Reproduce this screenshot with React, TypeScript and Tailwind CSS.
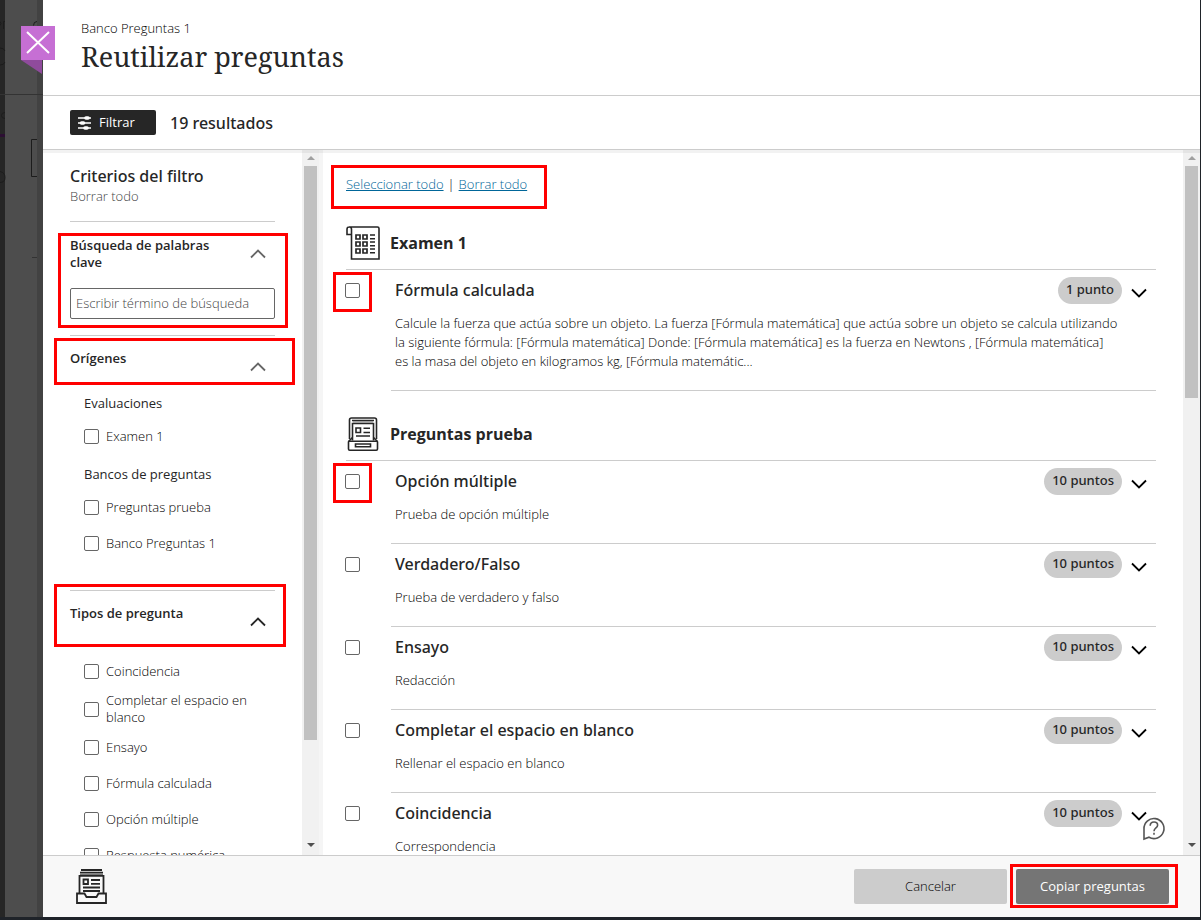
import type { ReactNode } from "react";

const evaluations = ["Examen 1"];
const banks = ["Preguntas prueba", "Banco Preguntas 1"];
const questionTypes = [
  "Coincidencia",
  "Completar el espacio en blanco",
  "Ensayo",
  "Fórmula calculada",
  "Opción múltiple",
  "Respuesta numérica",
];

type Question = {
  title: string;
  text: string;
  points: string;
  marked?: boolean;
};

const examQuestions: Question[] = [
  {
    title: "Fórmula calculada",
    text: "Calcule la fuerza que actúa sobre un objeto. La fuerza [Fórmula matemática] que actúa sobre un objeto se calcula utilizando la siguiente fórmula: [Fórmula matemática] Donde: [Fórmula matemática] es la fuerza en Newtons , [Fórmula matemática] es la masa del objeto en kilogramos kg, [Fórmula matemátic...",
    points: "1 punto",
    marked: true,
  },
];

const bankQuestions: Question[] = [
  { title: "Opción múltiple", text: "Prueba de opción múltiple", points: "10 puntos", marked: true },
  { title: "Verdadero/Falso", text: "Prueba de verdadero y falso", points: "10 puntos" },
  { title: "Ensayo", text: "Redacción", points: "10 puntos" },
  { title: "Completar el espacio en blanco", text: "Rellenar el espacio en blanco", points: "10 puntos" },
  { title: "Coincidencia", text: "Correspondencia", points: "10 puntos" },
];

// Red frame drawn over the part of the page that it points out.
const Highlight = ({ className }: { className: string }) => (
  <span aria-hidden="true" className={`pointer-events-none absolute border-3 border-[#ff0000] ${className}`} />
);

const Chevron = ({ up = false, className = "" }: { up?: boolean; className?: string }) => (
  <svg viewBox="0 0 16 10" fill="none" stroke="currentColor" strokeWidth="1.8" className={`h-[10px] w-4 ${className}`}>
    <path d={up ? "M1 8.5 8 1.5l7 7" : "M1 1.5l7 7 7-7"} />
  </svg>
);

const ExamIcon = () => (
  <svg viewBox="0 0 34 34" fill="none" stroke="#262626" strokeWidth="1.6" className="size-[34px] shrink-0">
    <path d="M3 1h28.500q1.500 0 1.500 1.500V33H5.500V3.200Q5.500 1 3.200 1 1 1 1 3.200V8.500h4.500" />
    <path strokeWidth="1.700" d="M10 9h4v4h-4zM17 9h4v4h-4zM10 16h4v4h-4zM17 16h4v4h-4zM10 23h4v4h-4zM17 23h4v4h-4z" />
    <path strokeWidth="1.500" d="M24 9h5M24 12.800h5M24 16h5M24 19.800h5M24 23h5M24 26.800h5" />
  </svg>
);

const BankIcon = () => (
  <svg viewBox="0 0 34 34" fill="none" stroke="#262626" strokeWidth="1.6" className="size-[34px] shrink-0">
    <path d="M3.500 22V3q0-2 2-2h23q2 0 2 2v19" />
    <path d="M6.500 23.500V6.500h21v17M6 3.500h22" />
    <path strokeWidth="1" stroke="#777" d="M7 5h20" />
    <path d="M6.500 20.500 3 24q-.500 0-.500 1v7q0 1.200 1.200 1.200h26.600q1.200 0 1.200-1.200v-7q0-1-.500-1l-3.500-3.500" />
    <path d="M2.500 24.200h29M10 11h4.500v4.500H10zM17.500 11.200h6.500M17.500 15.500h6.500M10 19h14M9.500 27h15v2.800h-15z" />
  </svg>
);

const TrayIcon = () => (
  <svg viewBox="0 0 31 35" fill="none" stroke="#262626" strokeWidth="1.800" className="h-[35px] w-[31px] shrink-0">
    <path d="M5 1h21M4 3.700h23" />
    <path stroke="#777" d="M4 5.500h23" />
    <path d="M3.500 24V6.800h24V24" />
    <path d="M7.500 10.500h4.500v4.500H7.500zM15 11h9M15 14.800h9M7 18.500h17M7 22h17" />
    <path d="M3.500 24.500H1V34h29v-9.500h-7.500L20.500 28h-10l-2-3.500z" />
  </svg>
);

const FilterIcon = () => (
  <svg viewBox="0 0 13 14" fill="none" stroke="white" strokeWidth="1.700" className="h-[14px] w-[13px]">
    <path d="M0 2h13M0 7h13M0 12h13" />
    <path strokeWidth="3.600" strokeLinecap="round" d="M8 2h2M3.500 7h2M7 12h2" />
  </svg>
);

const HelpIcon = () => (
  <svg viewBox="0 0 24 24" fill="white" stroke="#555" strokeWidth="1.600" className="size-6">
    <path d="M2 22V12A10 10 0 1 1 7 20.200L2 22z" />
    <path fill="none" d="M8.200 8.700Q8.200 5 12 5t3.600 3.200c0 2.800-3.600 2.600-3.600 6M12 15.700v2" />
  </svg>
);

const Scrollbar = ({ thumb }: { thumb: string }) => (
  <div aria-hidden="true" className="flex w-[17px] shrink-0 flex-col items-center bg-[#f1f1f1]">
    <svg viewBox="0 0 8 4" className="mt-1.5 mb-1.5 h-1 w-2 shrink-0 fill-[#a0a0a0]">
      <path d="M4 0l4 4H0z" />
    </svg>
    <div className={`w-[13px] bg-[#c1c1c1] ${thumb}`} />
    <svg viewBox="0 0 8 4" className="mt-auto mb-2 h-1 w-2 shrink-0 fill-[#505050]">
      <path d="M4 4l4-4H0z" />
    </svg>
  </div>
);

const checkboxStyle =
  "size-[15px] shrink-0 appearance-none rounded-[2px] border border-[#666] bg-white checked:bg-[#262626]";

const titleStyle = "font-['Noto_Sans','Open_Sans',sans-serif] text-base font-medium text-[#262626]";

const FilterOption = ({ label }: { label: string }) => (
  <label className="flex min-h-9 items-center gap-[7px] py-[3px] leading-[17px]">
    <input type="checkbox" className={checkboxStyle} />
    <span>{label}</span>
  </label>
);

const FilterHeading = ({ children, dark = false }: { children: ReactNode; dark?: boolean }) => (
  <h3>
    <button type="button" className="flex w-full items-start justify-between text-left font-semibold leading-[17px] text-[#262626]">
      <span className="w-[150px]">{children}</span>
      <Chevron up className={`mt-3 mr-[9px] mb-1 ${dark ? "text-[#262626]" : "text-[#666]"}`} />
    </button>
  </h3>
);

const Filters = () => (
  <aside className="flex w-[280px] shrink-0 overflow-hidden">
    <div className="min-w-0 flex-1 px-[27px] pt-[15px]">
      <h2 className={`leading-[22px] ${titleStyle}`}>Criterios del filtro</h2>
      <button type="button" className="block leading-[18px] text-[#444]">Borrar todo</button>

      <section className="relative mt-4 border-t border-[#ccc] pt-[15px] pb-4">
        <FilterHeading>Búsqueda de palabras clave</FilterHeading>
        <input
          type="text"
          aria-label="Búsqueda de palabras clave"
          placeholder="Escribir término de búsqueda"
          className="mt-[17px] block h-[31px] w-full rounded-[2px] border border-[#666] px-[5px] pb-0.5 placeholder:text-[#444]"
        />
        <Highlight className="top-[11px] -right-[13px] bottom-[7px] -left-3" />
      </section>

      <section className="relative border-t border-[#ccc] pt-[14px] pb-[29px]">
        <FilterHeading>Orígenes</FilterHeading>
        <Highlight className="top-[2px] -right-5 -left-4 h-[47px]" />
        <div className="mt-[19px] pl-[14px]">
          <h4 className="font-medium leading-[17px] text-[#262626]">Evaluaciones</h4>
          <div className="mt-1.5">
            {evaluations.map((label) => <FilterOption key={label} label={label} />)}
          </div>
          <h4 className="mt-3 font-medium leading-[17px] text-[#262626]">Bancos de preguntas</h4>
          <div className="mt-1.5">
            {banks.map((label) => <FilterOption key={label} label={label} />)}
          </div>
        </div>
      </section>

      <section className="relative border-t border-[#ccc] pt-[14px]">
        <FilterHeading dark>Tipos de pregunta</FilterHeading>
        <Highlight className="-top-[7px] -right-[11px] -left-4 h-[63px]" />
        <div className="mt-[22px] pl-[14px]">
          {questionTypes.map((label) => <FilterOption key={label} label={label} />)}
        </div>
      </section>
    </div>
    <Scrollbar thumb="h-[574px]" />
    <div className="w-1 shrink-0 bg-[#f5f5f5]" />
  </aside>
);

const QuestionRow = ({ question }: { question: Question }) => (
  <li className="-ml-px flex">
    <div className="w-[46px] shrink-0 pt-[13px]">
      <div className="relative size-[15px]">
        <input type="checkbox" aria-label={question.title} className={`${checkboxStyle} block`} />
        {question.marked && <Highlight className="-inset-x-3 -top-[11px] -bottom-[14px]" />}
      </div>
    </div>
    <div className="min-w-0 flex-1 border-b border-[#ccc] pt-2 pb-[19px] pl-1">
      <div className="flex h-6 items-center">
        <h3 className={`flex-1 ${titleStyle}`}>{question.title}</h3>
        <span className="flex h-[27px] items-center rounded-full bg-[#ccc] px-2 font-['Noto_Sans','Open_Sans',sans-serif] font-medium text-[#262626]">
          {question.points}
        </span>
        <button type="button" aria-label="Mostrar detalles" className="px-[9px] pt-1.5">
          <Chevron />
        </button>
      </div>
      <p className="mt-3 mr-[37px] leading-[19px]">{question.text}</p>
    </div>
  </li>
);

const QuestionGroup = ({ title, icon, questions }: { title: string; icon: ReactNode; questions: Question[] }) => (
  <section>
    <div className="flex items-center gap-[10px] border-b border-[#ccc] pb-[9px]">
      {icon}
      <h2 className="text-base font-bold text-[#262626]">{title}</h2>
    </div>
    <ul>
      {questions.map((question) => <QuestionRow key={question.title} question={question} />)}
    </ul>
  </section>
);

// Strip of the dimmed page behind the panel, with the close button on top.
const Backdrop = () => (
  <div className="relative w-[43px] shrink-0 bg-[#4d4d4d]">
    <div className="flex h-full justify-between">
      <div className="w-[5px] bg-[#262626]" />
      <div className="w-1.5 bg-[#424242]" />
    </div>
    <svg viewBox="0 0 43 270" fill="none" stroke="#1c1c1c" className="absolute top-0 left-0 h-[270px] w-[43px]">
      <path stroke="#333" d="M0 94.500h43M32 257.500h5" />
      <path stroke="#2c0f33" strokeWidth="3" d="M0 135.500h5" />
      <path d="M37 139.500h-5.500v37H37M37 21.500q-3.500 0-3.500 4" />
      <path d="M3.500 29v-7.500h1.500M0 21.500q2 2 0 4M0 48q4 0 5 3M0 65q4 0 5-3M5 112.500q-3.500 0-3.500 3t3.500 3M0 171.500q5 1 5 6t-5 5" />
    </svg>
    <button type="button" aria-label="Cerrar" className="absolute top-[26px] left-[21px] z-10">
      <svg viewBox="0 0 34 48" className="h-12 w-[34px]">
        <path fill="#c66fd4" d="M0 0h34v34H0z" />
        <path fill="#8f4b9c" d="M0 34h21v14z" />
        <path stroke="white" strokeWidth="2" d="M6 6l22 21M28 6 6 27" />
      </svg>
    </button>
  </div>
);

export default function App() {
  return (
    <div className="flex h-screen border-r border-b-3 border-[#1f2329] bg-white font-['Open_Sans',sans-serif] text-[13px] font-light text-black">
      <Backdrop />
      <div className="flex min-w-0 flex-1 flex-col">
        <header className="border-b border-[#ccc] pt-[18px] pb-[19px] pl-[38px]">
          <p className="leading-5">Banco Preguntas 1</p>
          <h1 className="font-['Noto_Serif','DejaVu_Serif',serif] text-[27px] font-normal leading-[38px] text-[#262626]">
            Reutilizar preguntas
          </h1>
        </header>

        <div className="flex h-[54px] shrink-0 items-center gap-[14px] border-b border-[#ccc] pl-[27px]">
          <button type="button" className="flex h-[25px] w-[86px] items-center gap-2 rounded-[2px] bg-[#262626] pl-2 font-medium text-white">
            <FilterIcon />
            Filtrar
          </button>
          <p className={titleStyle}>19 resultados</p>
        </div>

        <div className="relative flex min-h-0 flex-1">
          <Filters />
          <main className="flex min-w-0 flex-1 overflow-hidden">
            <div className="min-w-0 flex-1 pt-6 pr-[27px] pl-[23px]">
              <div className="relative flex w-fit gap-1 leading-5">
                <a href="#todo" className="text-[#006699] underline">Seleccionar todo</a>
                <span>|</span>
                <a href="#borrar" className="text-[#006699] underline">Borrar todo</a>
                <Highlight className="-top-[9px] -right-5 -bottom-[15px] -left-[15px]" />
              </div>
              <div className="mt-8 flex flex-col gap-[26px]">
                <QuestionGroup title="Examen 1" icon={<ExamIcon />} questions={examQuestions} />
                <QuestionGroup title="Preguntas prueba" icon={<BankIcon />} questions={bankQuestions} />
              </div>
            </div>
            <Scrollbar thumb="h-[232px]" />
          </main>
          <div className="pointer-events-none absolute inset-x-0 top-0 h-[3px] bg-black/5" />
          <button type="button" aria-label="Ayuda" className="absolute right-[34px] bottom-[14px]">
            <HelpIcon />
          </button>
        </div>

        <footer className="flex h-[62px] shrink-0 items-center justify-between border-t border-[#ccc] bg-[#f8f8f8] pr-[31px] pl-[33px]">
          <TrayIcon />
          <div className="flex gap-[9px]">
            <button type="button" className="h-[35px] w-[153px] rounded-[2px] bg-[#ccc]">Cancelar</button>
            <div className="relative">
              <button type="button" className="h-[35px] w-[153px] rounded-[2px] bg-[#757575] font-medium text-white">
                Copiar preguntas
              </button>
              <Highlight className="-top-[5px] -right-[9px] -bottom-1 -left-1.5" />
            </div>
          </div>
        </footer>
      </div>
    </div>
  );
}
